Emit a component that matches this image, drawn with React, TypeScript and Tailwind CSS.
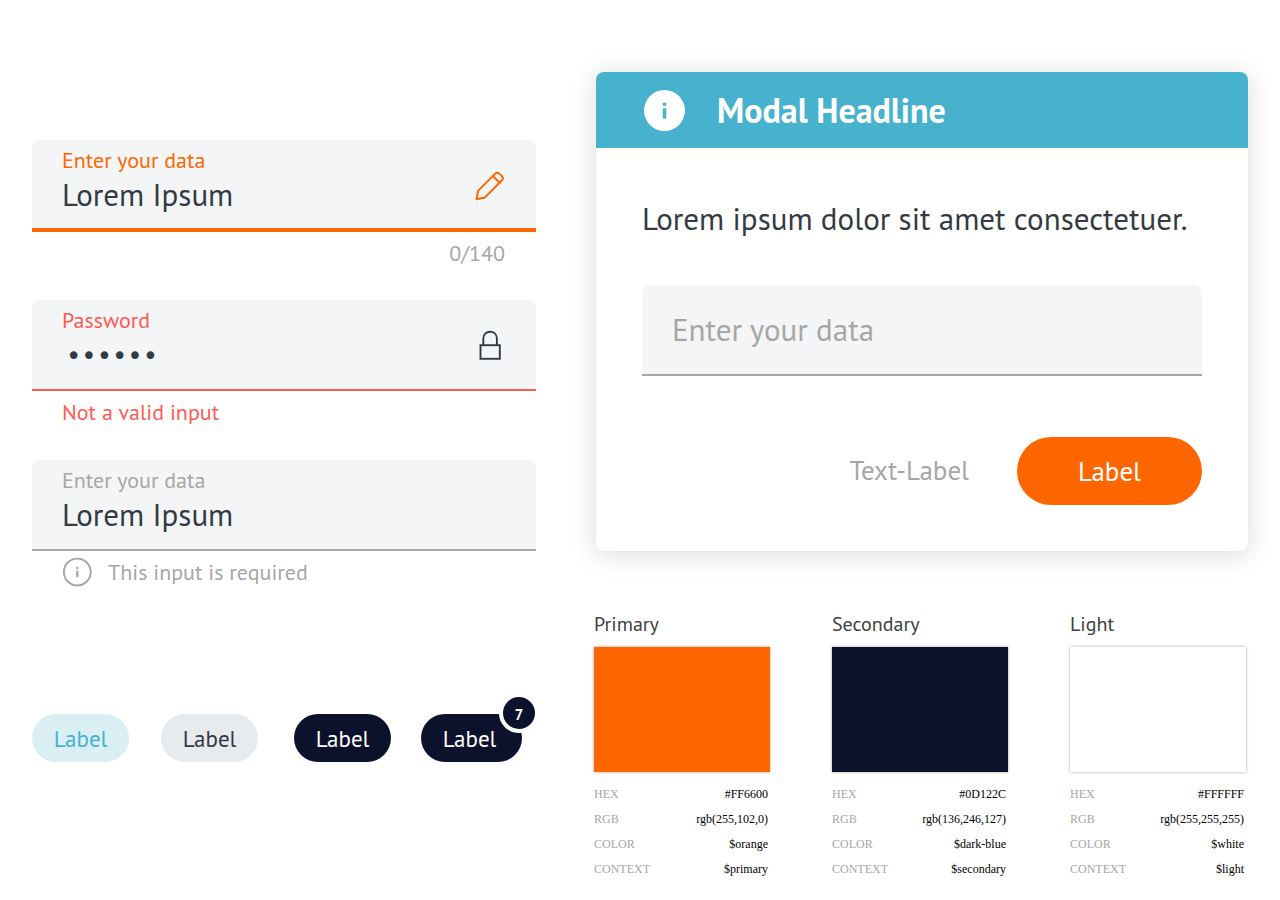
import type { ReactNode } from "react";

type FieldProps = {
  id: string;
  label: string;
  value: string;
  type?: string;
  labelClass: string;
  boxClass: string;
  inputClass?: string;
  icon?: ReactNode;
  children?: ReactNode;
};

function Field({ id, label, value, type = "text", labelClass, boxClass, inputClass = "text-[31px]", icon, children }: FieldProps) {
  return (
    <div className="min-h-40">
      <div className={`flex items-center rounded-t-lg bg-[#f4f5f7] pr-[31px] pl-[30px] ${boxClass}`}>
        <div className="flex min-w-0 flex-1 flex-col self-start pt-[7px]">
          <label htmlFor={id} className={`text-[22px] leading-[26px] ${labelClass}`}>
            {label}
          </label>
          <input
            id={id}
            type={type}
            defaultValue={value}
            className={`h-[45px] w-full bg-transparent text-[#343a43] outline-none ${inputClass}`}
          />
        </div>
        {icon}
      </div>
      {children}
    </div>
  );
}

function PencilIcon() {
  return (
    <svg viewBox="0 -3 30 33" className="h-[33px] w-[30px] shrink-0" fill="none" stroke="#ff6600" strokeWidth="2" strokeLinejoin="round" strokeLinecap="round" aria-hidden="true">
      <path d="M1.5 28.2 L3.2 19.6 L20.3 2.6 Q22.3 0.8 24.3 2.6 L27 5.3 Q28.8 7.3 27 9.3 L10 26.4 Z" />
      <path d="M17.9 5 L24.6 11.7" />
    </svg>
  );
}

function LockIcon() {
  return (
    <svg viewBox="0 0 30 30" className="size-[30px] shrink-0" fill="none" stroke="#343a43" strokeWidth="1.9" aria-hidden="true">
      <rect x="5.5" y="15.2" width="19.3" height="13.6" />
      <path d="M8.3 15.2 V8.6 C8.3 4.3 11.2 1.8 15.1 1.8 C19 1.8 21.9 4.3 21.9 8.6 V15.2" />
    </svg>
  );
}

function InfoOutlineIcon() {
  return (
    <svg viewBox="0 0 30 30" className="size-[30px] shrink-0" aria-hidden="true">
      <circle cx="15.3" cy="15" r="13.4" fill="none" stroke="#a6a6a6" strokeWidth="1.9" />
      <path d="M15.3 10 V12 M15.3 13.6 V20" stroke="#a6a6a6" strokeWidth="2.2" />
    </svg>
  );
}

function InfoSolidIcon() {
  return (
    <svg viewBox="0 0 41 41" className="size-[41px] shrink-0" aria-hidden="true">
      <circle cx="20.5" cy="20.5" r="20.5" fill="#fff" />
      <path d="M20.5 12.7 V15.7 M20.5 18.2 V28.4" stroke="#46b2ce" strokeWidth="3.6" />
    </svg>
  );
}

function Chip({ className, children }: { className: string; children: ReactNode }) {
  return (
    <button type="button" className={`relative h-12 rounded-full text-[23px] leading-none ${className}`}>
      {children}
    </button>
  );
}

const swatches = [
  { name: "Primary", fill: "bg-[#ff6600]", hex: "#FF6600", rgb: "rgb(255,102,0)", color: "$orange", context: "$primary" },
  { name: "Secondary", fill: "bg-[#0d122c]", hex: "#0D122C", rgb: "rgb(136,246,127)", color: "$dark-blue", context: "$secondary" },
  { name: "Light", fill: "bg-white", hex: "#FFFFFF", rgb: "rgb(255,255,255)", color: "$white", context: "$light" },
];

export default function App() {
  return (
    <main className="flex items-start gap-[58px] bg-white px-8 pt-[72px] pb-[18px] font-['PT_Sans','Noto_Sans',sans-serif] text-[#343a43]">
      <section className="min-w-0 flex-[504] pt-[68px]">
        <Field
          id="data-active"
          label="Enter your data"
          value="Lorem Ipsum"
          labelClass="text-[#ff6600]"
          boxClass="h-[92px] border-b-4 border-[#ff6600]"
          icon={<PencilIcon />}
        >
          <p className="pt-2 pr-[31px] pl-[30px] text-right text-[22px] leading-[26px] text-[#a6a6a6]">0/140</p>
        </Field>
        <Field
          id="password"
          label="Password"
          value="secret"
          type="password"
          labelClass="text-[#ff5a52]"
          boxClass="h-[91px] border-b-2 border-[#ff5a52]"
          inputClass="pl-1 font-['DejaVu_Sans',sans-serif] text-[26px]"
          icon={<LockIcon />}
        >
          <p className="px-[30px] pt-2 text-[22px] leading-[26px] text-[#ff5a52]">Not a valid input</p>
        </Field>
        <Field
          id="data-required"
          label="Enter your data"
          value="Lorem Ipsum"
          labelClass="text-[#a6a6a6]"
          boxClass="h-[91px] border-b-2 border-[#a6a6a6]"
        >
          <p className="flex items-center gap-4 px-[30px] pt-1.5 text-[22px] leading-[26px] text-[#a6a6a6]">
            <InfoOutlineIcon />
            This input is required
          </p>
        </Field>

        <div className="flex justify-between pt-[94px] pr-3.5">
          <div className="flex gap-8">
            <Chip className="w-[97px] bg-[#daeff4] text-[#46b2ce]">Label</Chip>
            <Chip className="w-[97px] bg-[#e8ebee]">Label</Chip>
          </div>
          <div className="flex gap-[30px]">
            <Chip className="w-[97px] bg-[#0d122c] text-white">Label</Chip>
            <Chip className="w-[101px] bg-[#0d122c] pr-1 text-white">
              Label
              <span className="absolute -top-[21px] -right-[17px] flex size-10 items-center justify-center rounded-full border-4 border-white bg-[#0d122c] pt-0.5 text-[15px] font-bold">
                7
              </span>
            </Chip>
          </div>
        </div>
      </section>

      <section className="min-w-0 flex-[654]">
        <div role="dialog" aria-labelledby="modal-title" className="ml-0.5 overflow-hidden rounded-lg bg-white shadow-[0_3px_26px_rgba(30,35,50,0.17)]">
          <header className="flex h-[76px] items-center gap-8 bg-[#46b2ce] px-12 text-white">
            <InfoSolidIcon />
            <h1 id="modal-title" className="text-[34px] leading-10 font-bold">
              Modal Headline
            </h1>
          </header>
          <div className="px-[46px] pt-[51px] pb-[46px]">
            <p className="text-[31px] leading-10">Lorem ipsum dolor sit amet consectetuer.</p>
            <input
              type="text"
              aria-label="Enter your data"
              placeholder="Enter your data"
              className="mt-[46px] h-[91px] w-full rounded-t-lg border-b-2 border-[#a6a6a6] bg-[#f4f5f7] px-[30px] text-[31px] outline-none placeholder:text-[#a6a6a6]"
            />
            <div className="mt-[61px] flex items-center justify-end gap-12">
              <button type="button" className="pb-0.5 text-[27px] text-[#a6a6a6]">
                Text-Label
              </button>
              <button type="button" className="h-[68px] w-[185px] rounded-full bg-[#ff6600] text-[27px] text-white">
                Label
              </button>
            </div>
          </div>
        </div>

        <div className="grid grid-cols-3 gap-[62px] pt-[60px] pr-0.5">
          {swatches.map((s) => (
            <article key={s.name}>
              <h2 className="text-[20px] leading-[26px] text-[#404040]">{s.name}</h2>
              <div className={`mt-2.5 h-[125px] shadow-[0_0_3px_rgba(0,0,0,0.35)] ${s.fill}`} />
              <table className="mt-2.5 w-full font-['Liberation_Serif',serif] text-[12px] leading-[25px]">
                <tbody>
                  {[
                    ["HEX", s.hex],
                    ["RGB", s.rgb],
                    ["COLOR", s.color],
                    ["CONTEXT", s.context],
                  ].map(([key, value]) => (
                    <tr key={key}>
                      <th scope="row" className="text-left font-normal text-[#a6a6a6]">
                        {key}
                      </th>
                      <td className="pr-0.5 text-right text-black">{value}</td>
                    </tr>
                  ))}
                </tbody>
              </table>
            </article>
          ))}
        </div>
      </section>
    </main>
  );
}
